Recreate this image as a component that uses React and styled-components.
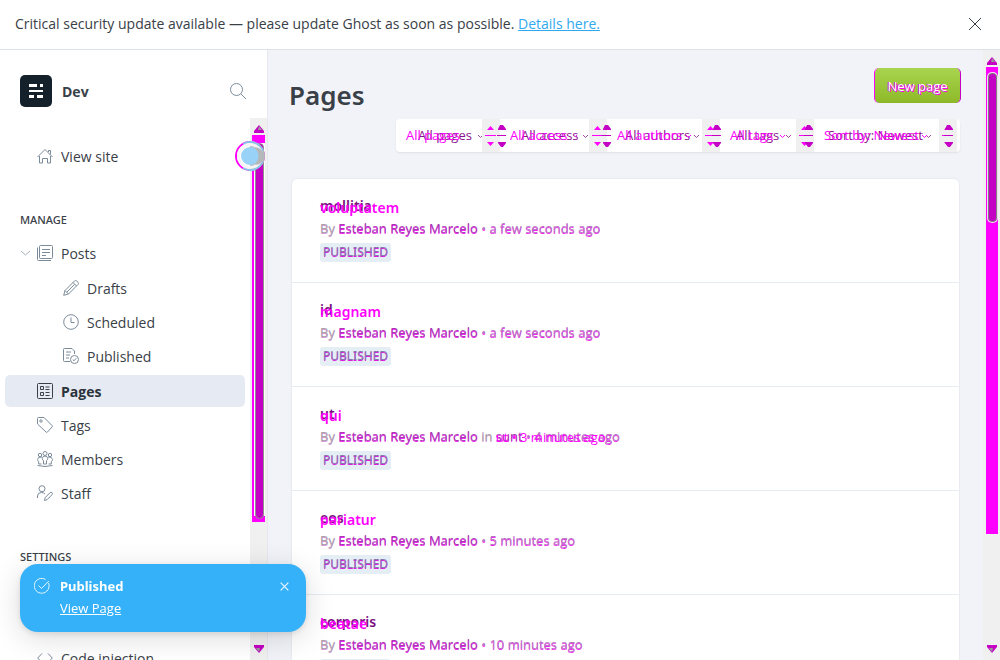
import React from 'react';
import styled, { createGlobalStyle, css } from 'styled-components';

const MAGENTA = '#ff00ff';
const PURPLE = '#c400c4';
const NOTO = '"Noto Sans", "Open Sans", sans-serif';

const GlobalStyle = createGlobalStyle`
  *, *::before, *::after { box-sizing: border-box; }
  body {
    margin: 0;
    font-family: "Open Sans", "Noto Sans", sans-serif;
    font-size: 14px;
    color: #394047;
    background: #f1f3f8;
  }
  button, select { font: inherit; color: inherit; }
  h1, h2, p, ul { margin: 0; padding: 0; }
  ul { list-style: none; }
`;

const Shell = styled.div`
  display: flex;
  flex-direction: column;
  height: 100vh;
  overflow: hidden;
`;

const Banner = styled.div`
  flex: none;
  display: flex;
  align-items: center;
  justify-content: space-between;
  height: 50px;
  padding: 0 18px 2px 15px;
  background: #fff;
  border-bottom: 1px solid #dce1e5;
`;

const BannerLink = styled.a`
  color: #30a9ef;
`;

const IconButton = styled.button`
  display: flex;
  align-items: center;
  justify-content: center;
  padding: 0;
  border: 0;
  background: none;
  cursor: pointer;
`;

const Body = styled.div`
  flex: 1;
  min-height: 0;
  display: flex;
`;

const Sidebar = styled.aside`
  flex: none;
  width: 268px;
  display: flex;
  flex-direction: column;
  background: #fff;
  border-right: 1px solid #e5e8ed;
`;

const SiteHeader = styled.header`
  flex: none;
  display: flex;
  align-items: center;
  gap: 10px;
  height: 68px;
  padding: 14px 21px 0 20px;
`;

const SiteName = styled.span`
  flex: 1;
  font-weight: 700;
`;

const NavScroll = styled.div`
  flex: 1;
  min-height: 0;
  display: flex;
`;

const Nav = styled.nav`
  flex: 1;
  min-width: 0;
  overflow: hidden;
  padding: 21px 5px 0;
`;

const NavHeading = styled.h2`
  height: 63px;
  padding: 37px 15px 0;
  font-family: ${NOTO};
  font-size: 11px;
  line-height: 20px;
  font-weight: 500;
`;

const SubList = styled.ul`
  padding: 1px 0;
`;

const NavEntry = styled.li`
  padding: 1px 0;
`;

const NavLink = styled.a`
  position: relative;
  display: flex;
  align-items: center;
  gap: 8px;
  height: 32px;
  padding-left: ${(p) => (p.$nested ? 58 : 32)}px;
  border-radius: 5px;
  color: #394047;
  text-decoration: none;
  ${(p) =>
    p.$active &&
    css`
      background: #e6eaf2;
      font-weight: 700;
      color: #2b333b;
    `}
`;

const Caret = styled.span`
  position: absolute;
  left: 15px;
  top: 12px;
  display: flex;
`;

const Track = styled.div`
  position: relative;
  flex: none;
  width: 17px;
  background: #f0f0f0;
`;

const ArrowMark = styled.span`
  position: absolute;
  left: 4px;
  ${(p) => (p.$down ? 'bottom: 7px;' : 'top: 7px;')}
  display: flex;
`;

const NavRegion = styled.div`
  position: absolute;
  left: 2px;
  top: 17px;
  width: 13px;
  height: 387px;
  background: ${MAGENTA};
  &::before {
    content: '';
    position: absolute;
    left: 2px;
    right: 0;
    top: 8px;
    bottom: 6px;
    background: #fff;
  }
`;

const NavThumb = styled.div`
  position: absolute;
  left: 3px;
  top: 8px;
  bottom: 3px;
  width: 9px;
  border: 1px solid #8f8f8f;
  border-radius: 5px;
  background: ${PURPLE};
`;

const PageRegion = styled.div`
  position: absolute;
  left: 3px;
  top: 17px;
  width: 12px;
  height: 467px;
  background: ${MAGENTA};
`;

const PageThumb = styled.div`
  position: absolute;
  left: 2px;
  top: 6px;
  width: 9px;
  height: 149px;
  border: 1px solid #7f7f7f;
  border-radius: 4px;
  background: ${PURPLE};
  box-shadow: 0 0 0 1px #f5d5f5;
`;

const Touch = styled.span`
  position: absolute;
  left: -15px;
  top: 23px;
  width: 30px;
  height: 30px;
  display: flex;
`;

const Main = styled.main`
  flex: 1;
  min-width: 0;
  overflow: hidden;
  padding: 18px 24px 0 24px;
`;

const TitleBar = styled.div`
  display: flex;
  justify-content: space-between;
  align-items: flex-start;
  height: 51px;
`;

const PageTitle = styled.h1`
  margin: 7px 0 0 -3px;
  font-family: ${NOTO};
  font-size: 26px;
  line-height: 40px;
  font-weight: 600;
`;

const NewButton = styled.button`
  position: relative;
  width: 87px;
  height: 35px;
  padding: 0;
  margin-right: -2px;
  border: 0;
  border-left: 1px solid ${MAGENTA};
  border-right: 1px solid ${PURPLE};
  border-radius: 5px;
  background: linear-gradient(#a9d44f, #8db928) padding-box;
  color: #fff;
  font-size: 13px;
  font-weight: 500;
  text-shadow: 1px 1px 0 ${MAGENTA}, -1px 0 0 ${PURPLE};
`;

const Filters = styled.div`
  display: flex;
  width: fit-content;
  margin: 0 -1px 27px auto;
  padding-right: 3px;
  border-radius: 4px;
  background: #fff;
  box-shadow: 0 1px 2px rgba(0, 0, 0, 0.08);
`;

const FilterField = styled.label`
  position: relative;
  display: flex;
  height: 33px;
  width: ${(p) => p.$width}px;
`;

const FilterSelect = styled.select`
  appearance: none;
  width: 100%;
  padding: 0 0 2px ${(p) => 10 + p.$shift}px;
  border: 0;
  border-radius: 4px;
  background: none;
  color: #8a128f;
  font-size: 13px;
`;

const Echo = styled.span`
  position: absolute;
  left: ${(p) => p.$left || 0}px;
  top: ${(p) => p.$top || 0}px;
  line-height: ${(p) => p.$line}px;
  color: ${MAGENTA};
  white-space: nowrap;
  pointer-events: none;
`;

const FilterEcho = styled(Echo)`
  font-size: 13px;
`;

const Chevrons = styled.span`
  position: absolute;
  right: ${(p) => p.$right}px;
  top: 15px;
  display: flex;
`;

const Stepper = styled.span`
  position: relative;
  width: 18px;
  height: 33px;
  background: #f0f0f0;
`;

const StepperMarks = styled.svg`
  position: absolute;
  left: 0;
  top: 0;
  z-index: 1;
`;

const Card = styled.ul`
  border-radius: 5px;
  background: #fff;
  box-shadow: 0 0 2px rgba(0, 0, 0, 0.12);
`;

const Entry = styled.li`
  height: 104px;
  padding: 16px 28px 0;
  border-bottom: 1px solid #e5ecf3;
`;

const EntryTitle = styled.h2`
  position: relative;
  font-family: ${NOTO};
  font-size: 14px;
  line-height: 22px;
  font-weight: 600;
  color: #7a0f80;
`;

const TitleEcho = styled(Echo)`
  font-weight: 600;
`;

const Meta = styled.p`
  position: relative;
  height: 24px;
  font-size: 13px;
  line-height: 22px;
  b { font-weight: 500; }
`;

const Tinted = styled.span`
  color: #b678c0;
  text-shadow: 0 1px 0 rgba(240, 0, 240, 0.85);
  b { color: #a63cb0; }
`;

const Lead = styled.span`
  color: #a9a3a9;
  text-shadow: 0 1px 0 #dc9adc;
`;

const MetaEcho = styled(Echo)`
  left: auto;
`;

const Badge = styled.span`
  display: inline-block;
  height: 19px;
  padding: 0 3px;
  border-radius: 3px;
  background: #e5edf5;
  font-family: ${NOTO};
  font-size: 12px;
  line-height: 17px;
  color: #8878b0;
  text-shadow: 0 1px 0 rgba(220, 0, 220, 0.9);
`;

const Toast = styled.aside`
  position: fixed;
  left: 20px;
  bottom: 28px;
  width: 286px;
  height: 68px;
  display: flex;
  gap: 10px;
  padding: 11px 16px 0 14px;
  border-radius: 18px;
  background: #35b1f9;
  color: #fff;
  box-shadow: 0 6px 30px rgba(0, 0, 0, 0.14), 0 2px 6px rgba(0, 0, 0, 0.1);
  z-index: 5;
`;

const ToastText = styled.div`
  flex: 1;
  font-family: ${NOTO};
  font-size: 13px;
  line-height: 22px;
  font-weight: 700;
`;

const ToastLink = styled.a`
  font-family: "Open Sans", "Noto Sans", sans-serif;
  font-weight: 500;
  color: #fff;
`;

const ToastClose = styled(IconButton)`
  width: 12px;
  height: 22px;
`;

const paths = {
  search: (<><circle cx="6.5" cy="6.5" r="6" /><path d="M11 11l5 5" /></>),
  home: (<><path d="M.5 9L8 1.5 15.500 9M2.500 8v7h3v-4.500h5V15h3V8M11.500 4V2.500h2V6.500" /></>),
  posts: (<><rect x="2.500" y=".5" width="13" height="13" rx="1" /><path d="M.5 2.500V14.500q0 1 1 1H14M5 4.500h8M5 7.500h8M5 10.500h4" /></>),
  pencil: (<><path d="M.7 15.300l1.300-4.800L11.500 1q1-1 2.200 0l1.300 1.300q1 1.200 0 2.200L5.500 14zM2 10.500L5.500 14M10 2.500L13.500 6M3.700 12.300l8-8" /></>),
  clock: (<><circle cx="8" cy="8" r="7.300" /><path d="M8 3.500V8.500H11.500" /></>),
  published: (<><path d="M7 13.500H1.500q-1 0-1-1V1.500q0-1 1-1H9L11.500 3V6M3 4h5M3 7h4M3 10h3" /><circle cx="11.500" cy="11.500" r="4" /><path d="M9.700 11.500l1.300 1.300 2.300-2.600" /></>),
  pages: (<><rect x=".5" y=".5" width="15" height="15" rx="1" /><path d="M3.500 3.500h3v3h-3zM3.500 9.500h3v3h-3zM8.500 4h4M8.500 6.500h4M8.500 9.500h4M8.500 12.500h4" /></>),
  tag: (<><path d="M.5 1.500q0-1 1-1H7L15 8.500q.8.800 0 1.500L10.500 15q-.8.800-1.500 0L.5 7z" /><circle cx="4" cy="4" r="1.200" /></>),
  members: (<><circle cx="8" cy="2.500" r="2" /><circle cx="3" cy="4" r="1.700" /><circle cx="13" cy="4" r="1.700" /><path d="M6.500 13V9.500q-1.300-.5-1.200-2Q5.500 5 8 5t2.700 2.500q.1 1.500-1.200 2V13zM5 6Q.8 5.500.5 8.500q0 1.500 1.200 2V13H4.500M11 6q4.200-.5 4.500 2.500 0 1.500-1.200 2V13H11.500M.5 14.500q7.500 2 15 0" /></>),
  staff: (<><circle cx="5" cy="3.700" r="3" /><path d="M.5 13V11q0-3.500 4-3.500 2.500 0 3.500 1.500M7.500 15.500l.7-3L13 7.700q1-1 2 0t0 2l-4.700 4.800z" /></>),
  code: (<><path d="M5 3.500L.7 8 5 12.500M11 3.500L15.300 8 11 12.500" /></>),
  labs: (<><path d="M6 .5h4M6.500 .5V6L1.500 15.500h13L9.500 6V.5" /></>),
  check: (<><path d="M14.500 5A7.400 7.400 0 1 1 11.500 1.500M4.500 7.500L7.500 10.500L14.800 3" /></>),
};

function Icon({ name, color = '#7c8b9a' }) {
  return (
    <svg width="16" height="16" viewBox="0 0 16 16" fill="none" stroke={color} strokeWidth="1" overflow="visible" aria-hidden="true">
      {paths[name]}
    </svg>
  );
}

function Cross({ size, color }) {
  return (
    <svg width={size} height={size} viewBox="0 0 14 14" fill="none" stroke={color} strokeWidth={size > 10 ? 1 : 2} aria-hidden="true">
      <path d="M1 1l12 12M13 1L1 13" />
    </svg>
  );
}

function TrackArrow({ down }) {
  return (
    <ArrowMark $down={down}>
      <svg width="10" height="8" viewBox="0 0 10 8" aria-hidden="true">
        <g transform={down ? 'rotate(180 5 4)' : undefined}>
          <path d="M5 0L10 6v2H0V6z" fill={PURPLE} />
          <path d="M5 1L8 5H4z" fill="#999" />
        </g>
      </svg>
    </ArrowMark>
  );
}

function NavItem({ icon, label, nested, active, caret }) {
  return (
    <NavEntry>
      <NavLink href="#" $nested={nested} $active={active} aria-current={active ? 'page' : undefined}>
        {caret && (
          <Caret>
            <svg width="11" height="8" viewBox="0 0 11 8" fill="none" stroke="#a3afb9" aria-hidden="true">
              <path d="M1 2l4.500 4L10 2" />
            </svg>
          </Caret>
        )}
        <Icon name={icon} color={active ? '#394047' : undefined} />
        {label}
      </NavLink>
    </NavEntry>
  );
}

const filters = [
  { label: 'Type', value: 'All pages', width: 86, shift: 12, step: 11, chevron: -2 },
  { label: 'Access', value: 'All access', width: 89, shift: 11, step: 9, chevron: 0 },
  { label: 'Author', value: 'All authors', width: 95, shift: 8, step: 6, chevron: 2 },
  { label: 'Tag', value: 'All tags', width: 76, shift: 6, step: 4, chevron: 4 },
  { label: 'Order', value: 'Sort by: Newest', width: 125, shift: 4, step: 1, chevron: 7 },
];

function Filter({ label, value, width, shift, step, chevron }) {
  return (
    <>
      <FilterField $width={width}>
        <FilterEcho $left={10} $line={33} aria-hidden="true">{value}</FilterEcho>
        <FilterSelect $shift={shift} aria-label={label} defaultValue={value}>
          <option>{value}</option>
        </FilterSelect>
        <Chevrons $right={chevron}>
          <svg width="14" height="5" viewBox="0 0 14 5" fill="none" aria-hidden="true">
            <path d="M8 1l2.500 2.500L13 1" stroke="#a04aa6" />
            {shift < 12 && <path d={`M${8 - shift} 1l2.500 2.500L${13 - shift} 1`} stroke={MAGENTA} />}
          </svg>
        </Chevrons>
      </FilterField>
      <Stepper>
        <StepperMarks width="28" height="33" viewBox="0 0 28 33" aria-hidden="true">
          <path d="M8.500 7L12 11H5zM5 23h7l-3.500 4zM3 16h11v1H3z" fill={MAGENTA} />
          <g transform={`translate(${step} 0)`} fill={PURPLE}>
            <path d="M7 6h3l3 4v1H5v-1zM5 23h8v1l-3 4H8l-3-4zM4 16h9v1H4z" />
          </g>
        </StepperMarks>
      </Stepper>
    </>
  );
}

const entries = [
  { title: 'mollitia', echo: 'voluptatem', age: 'a few seconds ago' },
  { title: 'id', echo: 'magnam', age: 'a few seconds ago' },
  { title: 'ut', echo: 'qui', tag: 'sunt', age: '4 minutes ago', echoTag: 'ut', echoAge: '3 minutes ago' },
  { title: 'eos', echo: 'pariatur', age: '5 minutes ago' },
  { title: 'corporis', echo: 'beatae', age: '10 minutes ago' },
];

function EntryRow({ title, echo, tag, age, echoTag, echoAge }) {
  return (
    <Entry>
      <EntryTitle>
        <TitleEcho $top={2} $line={22} aria-hidden="true">{echo}</TitleEcho>
        {title}
      </EntryTitle>
      <Meta>
        <Lead>By </Lead>
        <Tinted><b>Esteban Reyes Marcelo</b></Tinted>
        {tag && <Lead> in </Lead>}
        {tag && <MetaEcho $top={1} $line={22} aria-hidden="true"><b>{echoTag}</b> • {echoAge}</MetaEcho>}
        <Tinted>{tag && <b>{tag}</b>} • {age}</Tinted>
      </Meta>
      <Badge>PUBLISHED</Badge>
    </Entry>
  );
}

export default function App() {
  return (
    <Shell>
      <GlobalStyle />
      <Banner>
        <p>
          Critical security update available — please update Ghost as soon as possible.{' '}
          <BannerLink href="#">Details here.</BannerLink>
        </p>
        <IconButton aria-label="Close"><Cross size={14} color="#394047" /></IconButton>
      </Banner>
      <Body>
        <Sidebar>
          <SiteHeader>
            <svg width="32" height="32" viewBox="0 0 32 32" aria-hidden="true">
              <rect width="32" height="32" rx="5" fill="#15212a" />
              <path d="M9 9h8v3H9zM20 9h3v3h-3zM9 15h14v2H9zM9 20h5v3H9zM17 20h6v3h-6z" fill="#fff" />
            </svg>
            <SiteName>Dev</SiteName>
            <IconButton aria-label="Search"><Icon name="search" /></IconButton>
          </SiteHeader>
          <NavScroll>
            <Nav>
              <ul>
                <NavItem icon="home" label="View site" />
              </ul>
              <NavHeading>MANAGE</NavHeading>
              <ul>
                <NavItem icon="posts" label="Posts" caret />
                <li>
                  <SubList>
                    <NavItem icon="pencil" label="Drafts" nested />
                    <NavItem icon="clock" label="Scheduled" nested />
                    <NavItem icon="published" label="Published" nested />
                  </SubList>
                </li>
                <NavItem icon="pages" label="Pages" active />
                <NavItem icon="tag" label="Tags" />
                <NavItem icon="members" label="Members" />
                <NavItem icon="staff" label="Staff" />
              </ul>
              <NavHeading>SETTINGS</NavHeading>
              <ul>
                <NavItem icon="labs" label="Labs" />
                <NavItem icon="pages" label="General" />
                <NavItem icon="code" label="Code injection" />
              </ul>
            </Nav>
            <Track>
              <TrackArrow />
              <NavRegion><NavThumb /></NavRegion>
              <Touch>
                <svg width="30" height="30" viewBox="0 0 30 30" aria-hidden="true">
                  <circle cx="15" cy="15" r="14" fill="#fff" stroke={MAGENTA} strokeWidth="2" />
                  <path d="M15 0a15 15 0 0 1 0 30" fill="#b8b8b8" />
                  <path d="M8 3a14 14 0 0 1 20 7M28 20A14 14 0 0 1 8 27" fill="none" stroke="#86c5e8" strokeWidth="2" />
                  <circle cx="15" cy="15" r="11.500" fill="none" stroke="#f5f5f5" strokeWidth="3" />
                  <circle cx="15" cy="15" r="9" fill="#99d2f7" />
                  <path d="M20 6q7 9 0 18 10-1 9-9-1-8-9-9" fill="#b5b8ba" />
                </svg>
              </Touch>
              <TrackArrow down />
            </Track>
          </NavScroll>
        </Sidebar>
        <Main>
          <TitleBar>
            <PageTitle>Pages</PageTitle>
            <NewButton>New page</NewButton>
          </TitleBar>
          <Filters>
            {filters.map((f) => <Filter key={f.label} {...f} />)}
          </Filters>
          <Card>
            {entries.map((e) => <EntryRow key={e.title} {...e} />)}
          </Card>
        </Main>
        <Track>
          <TrackArrow />
          <PageRegion><PageThumb /></PageRegion>
          <TrackArrow down />
        </Track>
      </Body>
      <Toast role="status">
        <svg width="16" height="22" viewBox="0 -3 16 22" fill="none" stroke="#e4f5ff" aria-hidden="true">{paths.check}</svg>
        <ToastText>
          <p>Published</p>
          <ToastLink href="#">View Page</ToastLink>
        </ToastText>
        <ToastClose aria-label="Dismiss"><Cross size={9} color="#e4f5ff" /></ToastClose>
      </Toast>
    </Shell>
  );
}
